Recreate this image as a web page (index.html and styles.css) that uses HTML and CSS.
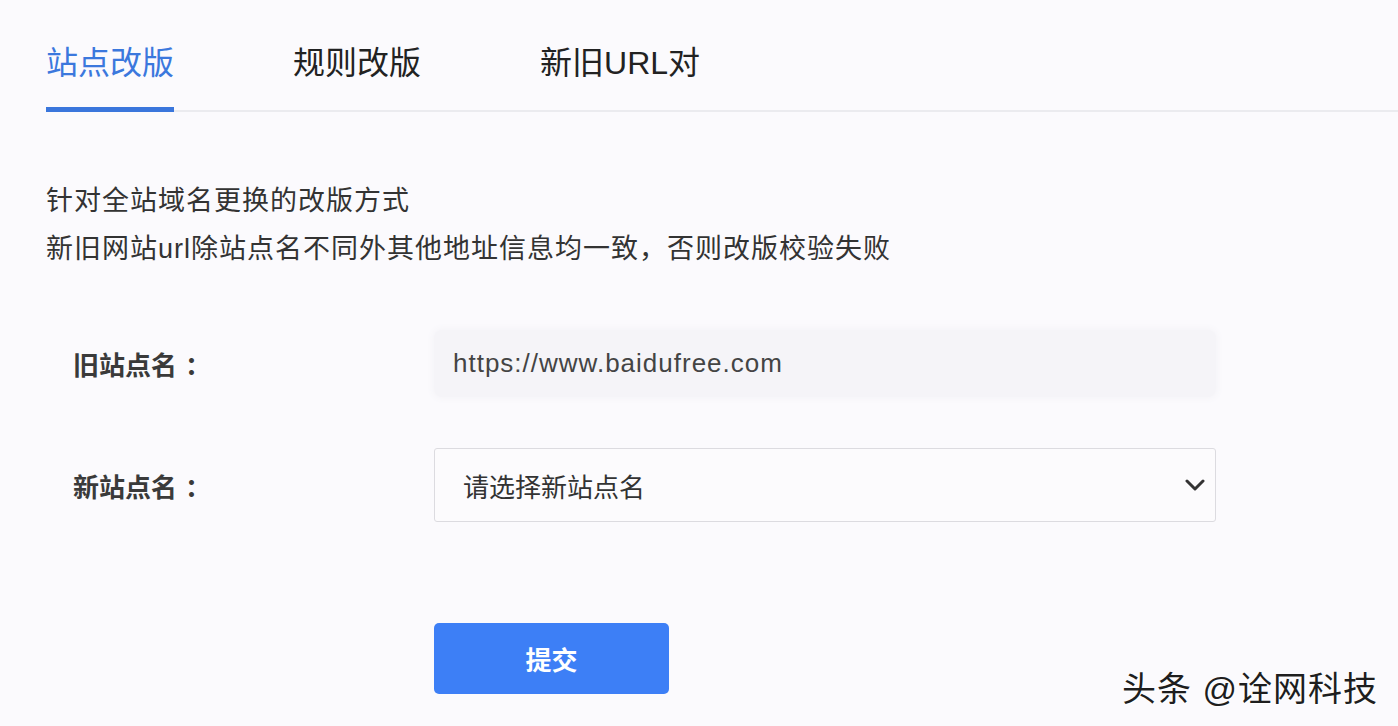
FILE: index.html
```html
<!doctype html>
<html lang="zh-CN">
<head>
    <meta charset="UTF-8">
    <meta name="viewport" content="width=device-width, initial-scale=1.0">
    <title>站点改版</title>
    <link rel="stylesheet" href="styles.css">
</head>
<body>
<div class="page">
    <div class="tabs">
        <div class="tab active">站点改版</div>
        <div class="tab">规则改版</div>
        <div class="tab">新旧URL对</div>
    </div>

    <div class="desc">
        <p>针对全站域名更换的改版方式</p>
        <p>新旧网站url除站点名不同外其他地址信息均一致，否则改版校验失败</p>
    </div>

    <form class="form" action="#" method="post">
        <div class="row">
            <label class="label">旧站点名<span class="colon">：</span></label>
            <div class="control readonly">https://www.baidufree.com</div>
        </div>
        <div class="row">
            <label class="label">新站点名<span class="colon">：</span></label>
            <div class="control select">
                <span>请选择新站点名</span>
                <svg class="chevron" width="20" height="12" viewBox="0 0 20 12">
                    <path d="M2 2 L10 10 L18 2" fill="none" stroke="#333" stroke-width="3" stroke-linecap="round" stroke-linejoin="round"/>
                </svg>
            </div>
        </div>
        <div class="actions">
            <button type="submit" class="submit">提交</button>
        </div>
    </form>
</div>

<div class="watermark">头条 @诠网科技</div>
</body>
</html>
```

FILE: styles.css
```css
body {
    margin: 0;
    background: #fbfafd;
    font-family: "Liberation Sans", "Noto Sans CJK SC", sans-serif;
    color: #333;
    height: 726px;
    overflow: hidden;
    position: relative;
}
.page {
    padding-left: 46px;
}
.tabs {
    display: flex;
    gap: 119px;
    padding-top: 41px;
    border-bottom: 2px solid #ebebef;
}
.tab {
    font-size: 32px;
    line-height: 44px;
    color: #222;
    padding-bottom: 22px;
    border-bottom: 5px solid transparent;
    margin-bottom: -2px;
}
.tab.active {
    color: #3b78dd;
    border-bottom-color: #3a76dc;
}
.desc {
    margin-top: 65px;
}
.desc p {
    margin: 0;
    font-size: 27px;
    line-height: 48px;
    letter-spacing: 1px;
    color: #333;
}
.form {
    margin-top: 57px;
    padding-left: 27px;
}
.row {
    display: flex;
    align-items: center;
    margin-bottom: 51px;
}
.label {
    width: 361px;
    flex: none;
    font-size: 26px;
    font-weight: 700;
    color: #3a3a3a;
}
.colon {
    padding-left: 8px;
}
.control {
    width: 782px;
    box-sizing: border-box;
    display: flex;
    align-items: center;
    font-size: 26px;
    color: #333;
}
.readonly {
    height: 67px;
    padding-left: 19px;
    letter-spacing: 1px;
    color: #444;
    background: #f5f4f8;
    border-radius: 8px;
    box-shadow: 0 0 6px 2px #f5f4f8;
}
.select {
    height: 74px;
    padding: 0 10px 0 28px;
    border: 1px solid #dcdbe0;
    border-radius: 3px;
    background: #fcfbfd;
    justify-content: space-between;
}
.actions {
    margin-top: 101px;
    padding-left: 361px;
}
.submit {
    width: 235px;
    height: 71px;
    border: 0;
    border-radius: 5px;
    background: #3d7ff6;
    color: #fff;
    font-family: inherit;
    font-size: 26px;
    font-weight: 700;
}
.watermark {
    position: absolute;
    left: 1122px;
    top: 662px;
    font-size: 34px;
    letter-spacing: 1px;
    color: #1e1e1e;
    text-shadow: 1px 1px 0 #fff, -1px 0 0 #fff;
}
```
